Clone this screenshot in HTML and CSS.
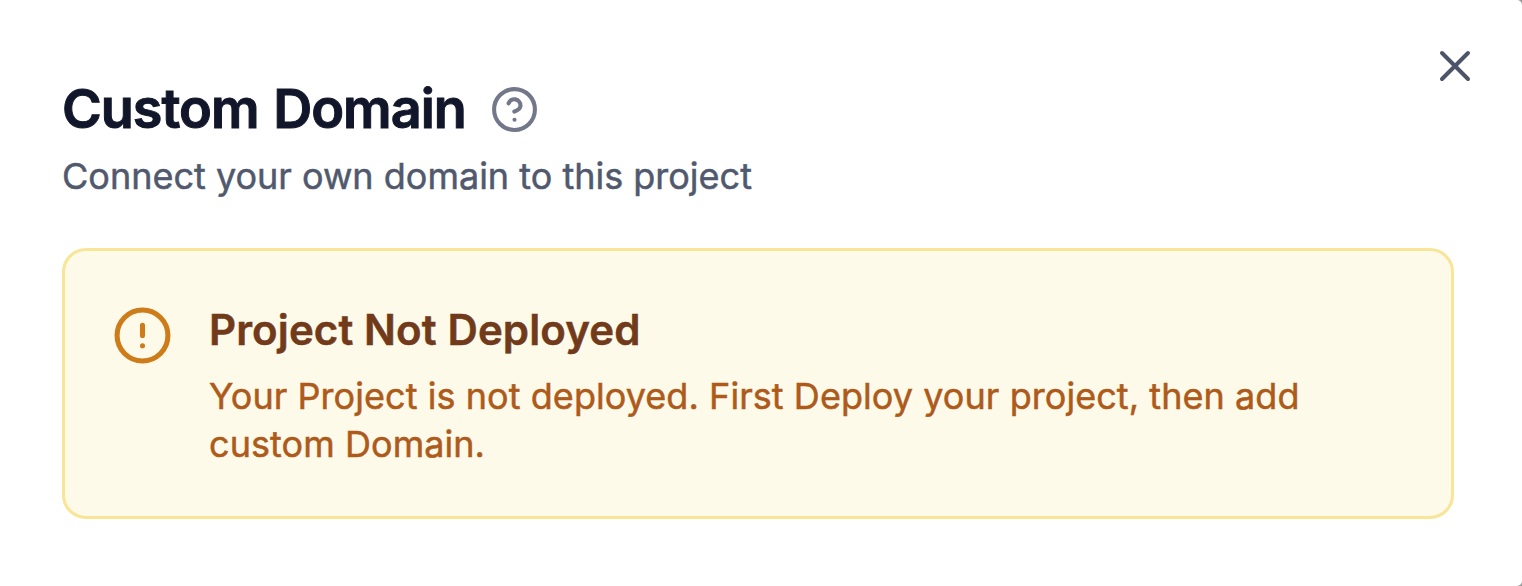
FILE: index.html
```html
<!DOCTYPE html>
<html lang="en">
<head>
    <meta charset="UTF-8">
    <meta name="viewport" content="width=device-width, initial-scale=1.0">
    <title>Custom Domain</title>
    <link rel="stylesheet" href="styles.css">
</head>
<body>
    <div class="dialog">
        <button class="close" aria-label="Close">
            <svg viewBox="0 0 32 32"><path d="M3 3l26 26M29 3L3 29"/></svg>
        </button>

        <header class="dialog-header">
            <div class="title-row">
                <h1>Custom Domain</h1>
                <svg class="help" viewBox="0 0 24 24">
                    <circle cx="12" cy="12" r="10"/>
                    <path d="M9.09 9a3 3 0 0 1 5.83 1c0 2-3 3-3 3"/>
                    <path d="M12 17h.01"/>
                </svg>
            </div>
            <p class="subtitle">Connect your own domain to this project</p>
        </header>

        <div class="alert">
            <svg class="alert-icon" viewBox="0 0 24 24">
                <circle cx="12" cy="12" r="10"/>
                <path d="M12 8v4M12 16h.01"/>
            </svg>
            <div class="alert-body">
                <h2>Project Not Deployed</h2>
                <p>Your Project is not deployed. First Deploy your project, then add custom Domain.</p>
            </div>
        </div>
    </div>
</body>
</html>
```

FILE: styles.css
```css
* {
    box-sizing: border-box;
    margin: 0;
    padding: 0;
}

body {
    background: #999;
    font-family: Inter, sans-serif;
    font-optical-sizing: none;
    -webkit-text-stroke: 0.5px currentColor;
}

svg {
    display: block;
    fill: none;
    stroke: currentColor;
    stroke-width: 2;
    stroke-linecap: round;
    stroke-linejoin: round;
}

.dialog {
    position: relative;
    height: 586px;
    padding: 76px 68px 0 62px;
    border-radius: 0 5px 5px 0;
    background: #fff;
}

/* Close button sits over the dialog corner */
.close {
    position: absolute;
    top: 50px;
    right: 51px;
    width: 32px;
    height: 32px;
    border: none;
    background: none;
    color: #4b5468;
    cursor: pointer;
}

.close svg {
    stroke-width: 4;
}

.title-row {
    display: flex;
    align-items: center;
    gap: 24px;
}

h1 {
    font-size: 54px;
    font-weight: 600;
    line-height: 66px;
    letter-spacing: -1px;
    word-spacing: 2px;
    color: #12162a;
    -webkit-text-stroke-width: 1px;
}

.help {
    width: 49px;
    height: 49px;
    color: #72778a;
}

.subtitle {
    margin-top: 10px;
    font-size: 36px;
    line-height: 48px;
    color: #50596d;
}

.alert {
    display: flex;
    gap: 36px;
    height: 271px;
    margin-top: 48px;
    padding: 48px 47px;
    border: 3px solid #f8e596;
    border-radius: 24px;
    background: #fefaea;
}

.alert-icon {
    flex: none;
    width: 61px;
    height: 61px;
    margin-top: 6px;
    color: #ce7b19;
}

h2 {
    margin-top: 4px;
    font-size: 42px;
    font-weight: 600;
    line-height: 54px;
    letter-spacing: 0.12px;
    color: #713a1a;
}

.alert-body p {
    margin-top: 15px;
    font-size: 36px;
    line-height: 48px;
    letter-spacing: 0.06px;
    color: #ad5a1a;
}
```
